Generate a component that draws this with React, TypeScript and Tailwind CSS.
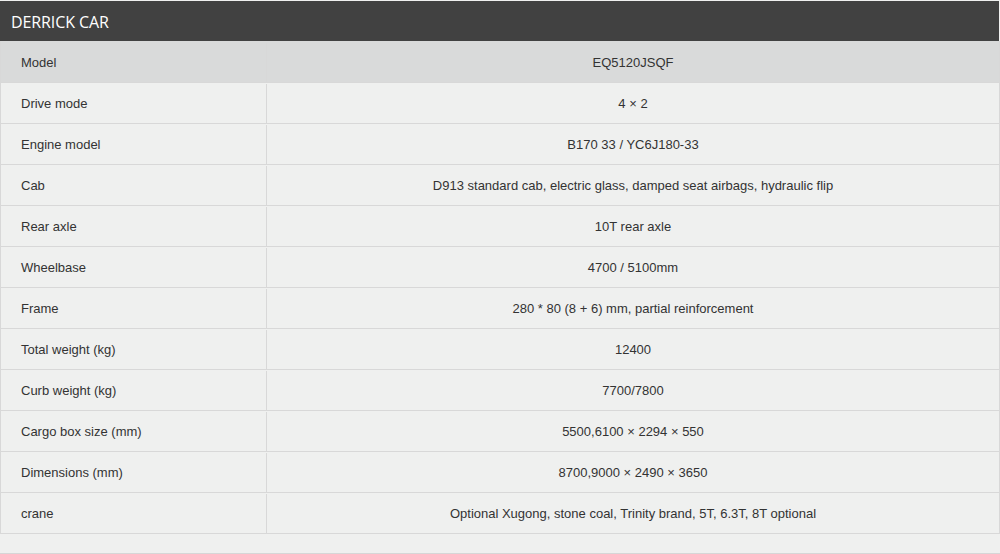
import React from "react";

const rows: [string, string][] = [
  ["Model", "EQ5120JSQF"],
  ["Drive mode", "4 × 2"],
  ["Engine model", "B170 33 / YC6J180-33"],
  ["Cab", "D913 standard cab, electric glass, damped seat airbags, hydraulic flip"],
  ["Rear axle", "10T rear axle"],
  ["Wheelbase", "4700 / 5100mm"],
  ["Frame", "280 * 80 (8 + 6) mm, partial reinforcement"],
  ["Total weight (kg)", "12400"],
  ["Curb weight (kg)", "7700/7800"],
  ["Cargo box size (mm)", "5500,6100 × 2294 × 550"],
  ["Dimensions (mm)", "8700,9000 × 2490 × 3650"],
  ["crane", "Optional Xugong, stone coal, Trinity brand, 5T, 6.3T, 8T optional"],
];

export default function App() {
  return (
    <div className="w-[1000px] h-[554px] bg-[#eff0ef] pt-px border-b border-[#d6d6d6] box-border" style={{ fontFamily: '"Liberation Sans", Arial, sans-serif' }}>
      <div className="h-10 bg-[#414141] flex items-center pl-[11px] pt-[2px] mr-px">
        <span className="text-white text-[16px] tracking-[-0.1px]" style={{ fontFamily: '"Open Sans", sans-serif' }}>DERRICK CAR</span>
      </div>
      <div className="w-[1000px] border-l border-r border-b border-[#d8d8d8] box-border">
        {rows.map(([k, v], i) => (
          <div
            key={k}
            className={`flex h-[41px] text-[13px] text-[#333333] ${i === 0 ? "bg-[#d9dada] pt-[2px]" : "bg-[#eff0ef] border-t border-[#d8d8d8] pt-px"}`}
          >
            <div className="w-[266px] border-r border-[#d8d8d8] flex items-center pl-5 box-border">{k}</div>
            <div className="flex-1 flex items-center justify-center">{v}</div>
          </div>
        ))}
      </div>
    </div>
  );
}
